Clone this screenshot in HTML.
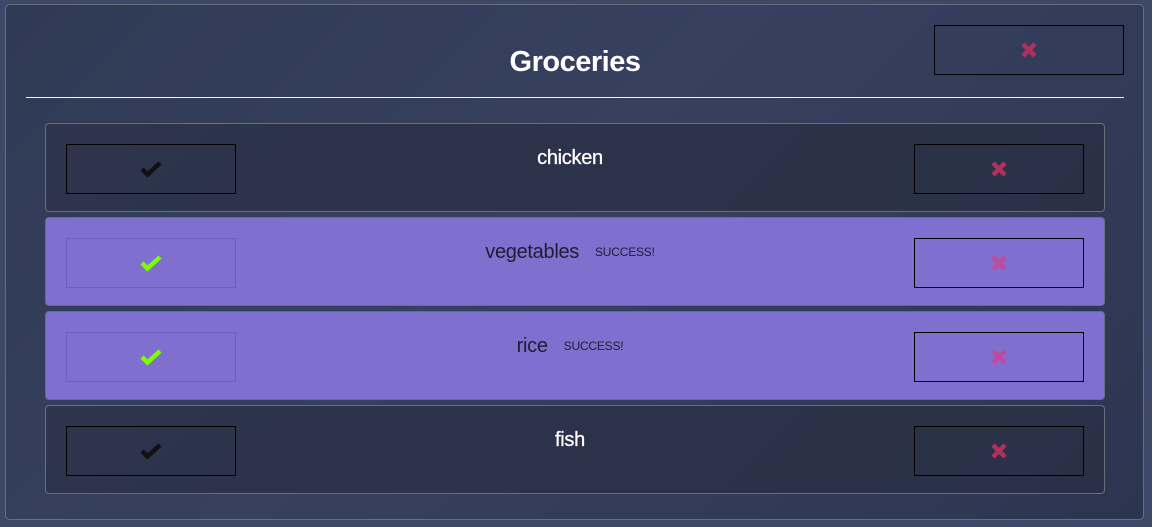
<!DOCTYPE html>
<html><head><meta charset="utf-8"><style>
*{box-sizing:border-box;margin:0;padding:0}
body{width:1152px;height:527px;overflow:hidden;background:#3c4866;font-family:"Liberation Sans",Arial,sans-serif;position:relative}
.panel{position:absolute;left:5px;top:4px;width:1139px;height:516px;border:1px solid #6a6e78;border-radius:5px;background:linear-gradient(135deg,#2f3a55 0%,#37415f 45%,#2c3550 100%)}
h1{position:absolute;left:0;width:1150px;top:46px;text-align:center;color:#fff;font-size:29px;font-weight:bold;letter-spacing:-0.5px}
.line{position:absolute;left:26px;top:97px;width:1098px;height:1px;background:#f0f0f0}
.btn{position:absolute;border:1px solid #000;width:170px;height:50px;display:flex;align-items:center;justify-content:center}
.item{position:absolute;left:45px;width:1060px;height:89px;border:1px solid #6a6e78;border-radius:4px;background:linear-gradient(135deg,#2d344c,#2a3147)}
.item.done{background:#7f6fcf}
.item .t{position:absolute;left:0;right:10px;top:23px;text-align:center;font-size:20px;color:#fff;letter-spacing:-0.3px;-webkit-text-stroke:0.3px #fff}
.item.done .t{color:#1e1e30;-webkit-text-stroke:0}
.item .t small{font-size:12px;margin-left:16px;vertical-align:2px;letter-spacing:-0.2px}
.l{left:20px;top:20px}.r{left:868px;top:20px}
.done .l{border:1px solid rgba(100,80,180,.6)}
</style></head><body>
<div class="panel"></div>
<h1>Groceries</h1>
<div class="btn" style="left:934px;top:25px;width:190px"><svg width="18" height="18" viewBox="0 0 18 18"><path d="M3 3L15 15M15 3L3 15" stroke="#b0305f" stroke-width="4.5"/></svg></div>
<div class="line"></div>

<div class="item" style="top:123px"><div class="t">chicken</div>
<div class="btn l"><svg width="22" height="18" viewBox="0 0 22 18"><path d="M2 9L7.5 14.5L20 3" stroke="#111" stroke-width="4.5" fill="none"/></svg></div>
<div class="btn r"><svg width="18" height="18" viewBox="0 0 18 18"><path d="M3 3L15 15M15 3L3 15" stroke="#b0305f" stroke-width="4.5"/></svg></div></div>

<div class="item done" style="top:217px"><div class="t">vegetables<small>SUCCESS!</small></div>
<div class="btn l"><svg width="22" height="18" viewBox="0 0 22 18"><path d="M2 9L7.5 14.5L20 3" stroke="#7cfc00" stroke-width="4.5" fill="none"/></svg></div>
<div class="btn r"><svg width="18" height="18" viewBox="0 0 18 18"><path d="M3 3L15 15M15 3L3 15" stroke="#c04a9e" stroke-width="4.5"/></svg></div></div>

<div class="item done" style="top:311px"><div class="t">rice<small>SUCCESS!</small></div>
<div class="btn l"><svg width="22" height="18" viewBox="0 0 22 18"><path d="M2 9L7.5 14.5L20 3" stroke="#7cfc00" stroke-width="4.5" fill="none"/></svg></div>
<div class="btn r"><svg width="18" height="18" viewBox="0 0 18 18"><path d="M3 3L15 15M15 3L3 15" stroke="#c04a9e" stroke-width="4.5"/></svg></div></div>

<div class="item" style="top:405px"><div class="t">fish</div>
<div class="btn l"><svg width="22" height="18" viewBox="0 0 22 18"><path d="M2 9L7.5 14.5L20 3" stroke="#111" stroke-width="4.5" fill="none"/></svg></div>
<div class="btn r"><svg width="18" height="18" viewBox="0 0 18 18"><path d="M3 3L15 15M15 3L3 15" stroke="#b0305f" stroke-width="4.5"/></svg></div></div>
</body></html>
